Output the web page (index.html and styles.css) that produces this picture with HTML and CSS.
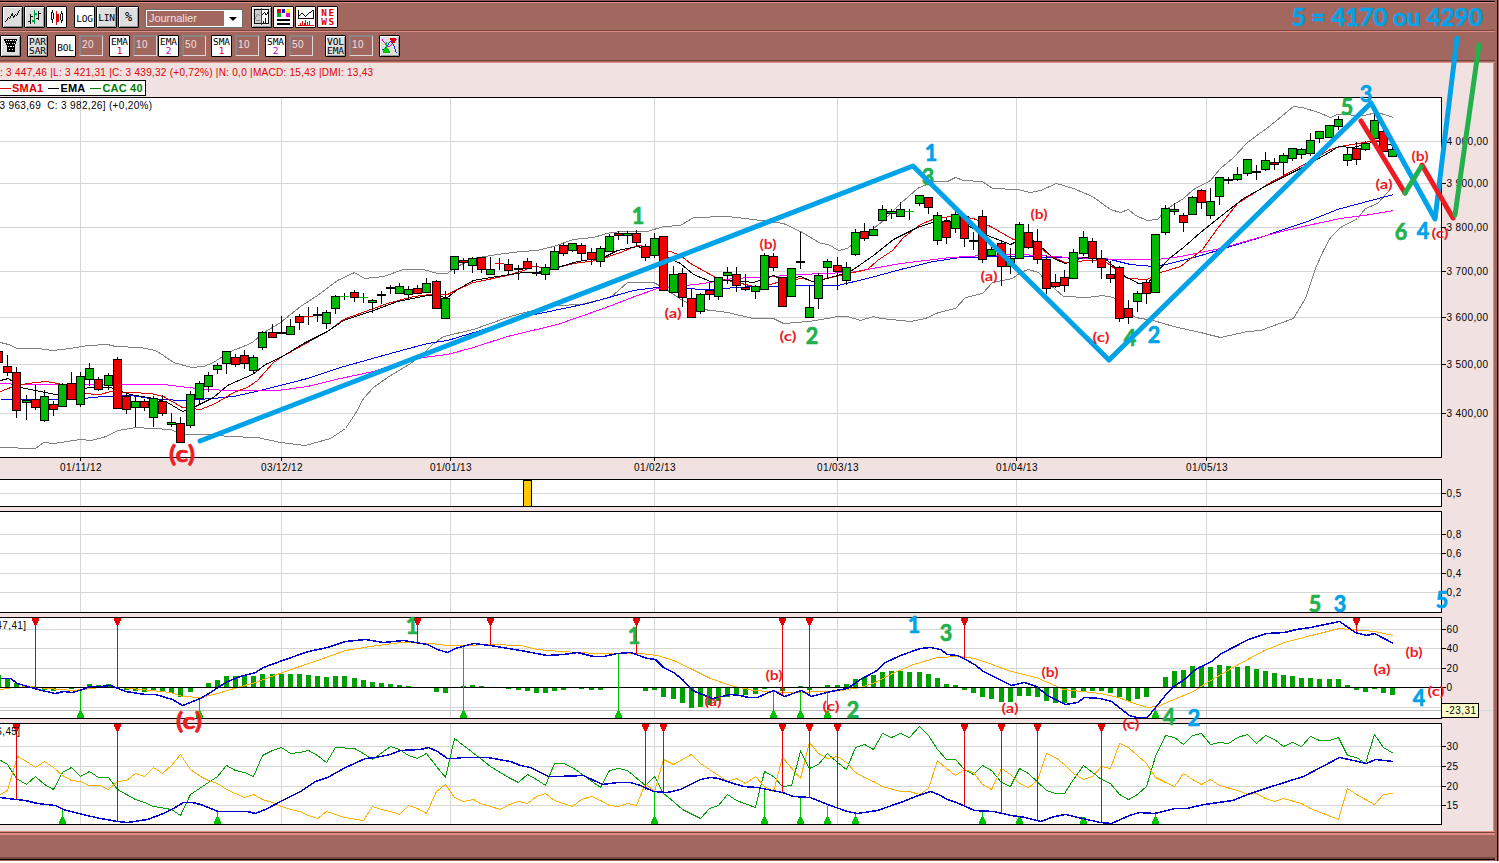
FILE: index.html
```html
<!DOCTYPE html>
<html lang="fr">
<head>
<meta charset="utf-8">
<title>CAC 40</title>
<link rel="stylesheet" href="styles.css">
</head>
<body>
<main class="app">
  <div class="toolbar toolbar-types">
    <div class="group">
      <button class="btn"><svg viewBox="0 0 20 20"><path d="M3 15l3-5 1 2 3-6 1 5 2-4 1 2 3-6" class="ink"/></svg></button>
      <button class="btn"><svg viewBox="0 0 20 20"><path d="M5.500 7v10M3 14.500h2M6 9.500h2M14.500 4v9M12 11.500h2M15 6.500h2" class="ink"/><path d="M10 3v14M7 14.500h2M11 6.500h2" class="ink green wide"/></svg></button>
      <button class="btn on"><svg viewBox="0 0 20 20"><path d="M5.500 3v13M15.500 4v12" class="ink"/><path d="M4.500 5.500h2v7h-2zM14.500 6.500h2v7h-2z" class="box"/><path d="M10.500 4v14" class="ink red"/><path d="M9 7h4v8h-4z" class="fill-red"/></svg></button>
    </div>
    <div class="group">
      <button class="btn on word">LOG</button>
      <button class="btn word lift">LIN</button>
      <button class="btn word percent">%</button>
    </div>
    <div class="select"><span>Journalier</span><i></i></div>
    <div class="group">
      <button class="btn"><svg viewBox="0 0 20 20"><path d="M3 2h14v14H3z" fill="#fff"/><path d="M3 2h6v14H3z" fill="#ccc"/><path d="M2.500 2v14.500h15V2.500H2M10.500 12v4M12.500 14v2M14.500 11v5" class="ink"/><path d="M3 12l3-5 2 2M4 14h4" class="ink grey"/><path d="M10 9l3-4 2 3 2-4" class="ink"/><path d="M9.500 1v17" class="ink red"/></svg></button>
      <button class="btn on"><svg viewBox="0 0 20 20"><path d="M3 2h4v4H3z" fill="#e00000"/><path d="M8 2h4v4H8z" fill="#0018f0"/><path d="M13 2h4v4h-4z" fill="#ffee00"/><path d="M3 6h4v4H3z" fill="#00b030"/><path d="M13 6h4v4h-4z" fill="#e000e0"/><path d="M3 13h14M3 17h14" class="ink wide"/></svg></button>
      <button class="btn on"><svg viewBox="0 0 20 20"><path d="M3 9l3-3 4 3 4-4 1 1 3-3M2.500 3v8.500h16V3" class="ink"/><path d="M2 18.500h17M4.500 16v2M6.500 14v4M8.500 16v2M10.500 13v5M12.500 15v3M14.500 14v4" class="ink red"/></svg></button>
      <button class="btn on pair news"><b>NE</b><b>WS</b></button>
    </div>
  </div>
  <div class="toolbar toolbar-indicators">
    <button class="btn"><svg viewBox="0 0 20 20"><path d="M3 3h14l-2 6v7H6V9z" fill="#000"/><path d="M5 4.500h11M6 7.500h9M7 10.500h7M8 13.500h5" class="ink dots"/></svg></button>
    <button class="btn pair psar"><b>PAR</b><b>SAR</b></button>
    <button class="btn on word bol">BOL</button><input class="num" value="20">
    <button class="btn on pair ema1"><b>EMA</b><b class="r">1</b></button><input class="num" value="10">
    <button class="btn on pair ema2"><b>EMA</b><b class="m">2</b></button><input class="num" value="50">
    <button class="btn on pair sma1"><b>SMA</b><b class="r">1</b></button><input class="num" value="10">
    <button class="btn on pair sma2"><b>SMA</b><b class="m">2</b></button><input class="num" value="50">
    <button class="btn pair vol"><b>VOL</b><b>EMA</b></button><input class="num" value="10">
    <button class="btn sig"><svg viewBox="0 0 20 20"><path d="M2 3l6 8 3-1 6-7" class="ink mag"/><path d="M2 14l3-1 6-8 4 5 2 7" class="ink blue"/><path d="M11 2h6v2l-2 3h-2l-2-3z" class="fill-red"/><path d="M3 17v-2l2-3h3l2 3v2z" fill="#00c800"/><path d="M6.500 6v6" class="ink green"/></svg></button>
  </div>

  <section class="workspace">
    <p class="stats">: 3 447,46 |L: 3 421,31 |C: 3 439,32 (+0,72%) |N: 0,0 |MACD: 15,43 |DMI: 13,43</p>
    <div class="legend">
      <span class="r"><i></i>SMA1</span><span class="k"><i></i>EMA</span><span class="g"><i></i>CAC 40</span>
    </div>
    <svg id="price" class="panel" viewBox="0 97 1493 382" height="382"></svg>
    <svg id="events" class="panel" viewBox="0 479 1493 32" height="32"></svg>
    <svg id="empty" class="panel" viewBox="0 511 1493 106" height="106"></svg>
    <svg id="macd" class="panel" viewBox="0 617 1493 106" height="106"></svg>
    <svg id="dmi" class="panel" viewBox="0 723 1493 108" height="108"></svg>
  </section>
  <footer class="statusbar"></footer>
  <svg id="waves" class="waves" viewBox="0 0 1499 863"></svg>
</main>
<script src="chart.js"></script>
</body>
</html>
```
FILE: styles.css
```css
* { box-sizing: border-box; }
body { margin: 0; background: #fff; font-family: "Liberation Sans", Arial, sans-serif; }
.app {
  position: relative;
  width: 1499px;
  height: 861px;
  overflow: hidden;
  display: flex;
  flex-direction: column;
  background: #a2675f;
  border-right: 1px solid #a2675f;
  box-shadow: inset -1px 0 #000;
}
.toolbar {
  display: flex;
  width: 1495px;
  flex: none;
  background: #a2675f;
}
.toolbar-types {
  height: 31px;
  padding: 2px 0 0 2px;
  border-top: 1px solid #8a5650;
  border-bottom: 1px solid #77463f;
  box-shadow: inset 0 1px #000, inset 0 2px #df8d84;
  gap: 8px;
}
.toolbar-types > * { margin-top: 3px; }
.toolbar-indicators {
  height: 32px;
  padding-top: 3px;
  border-top: 1px solid #df8d84;
  box-shadow: inset 0 -1px #df8d84, inset 0 -2px #a2675f, inset 0 -3px #77463f;
}
.group { display: flex; gap: 1px; height: 22px; }
.group + .group { margin-left: -1px; }
.btn {
  width: 21px;
  height: 22px;
  flex: none;
  padding: 0;
  border: 1px solid #000;
  border-radius: 1px;
  background: #dedede;
  box-shadow: inset 1px 1px #fff, inset -1px -1px #999;
  color: #000;
  font: 9.5px/9px "DejaVu Sans Mono", monospace;
  display: flex;
  align-items: center;
  justify-content: center;
  overflow: hidden;
}
.btn.on { background: #fff; box-shadow: inset 0 0 0 1px #fff; }
.btn svg { width: 19px; height: 20px; shape-rendering: crispEdges; }
.word { letter-spacing: -.3px; padding-top: 2px; }
.word.lift { padding-top: 0; }
.percent { font-size: 12px; padding: 0; }
.pair { flex-direction: column; gap: 0; letter-spacing: -.1px; }
.pair b { font-weight: 400; }
.news { color: #e00000; letter-spacing: 1.5px; padding-left: 2px; }
.news b { font-weight: 700; }
.r { color: #e00000; }
.m { color: #c000c0; }
.k { color: #000; }
.g { color: #007d00; }
.ink { fill: none; stroke: #000; stroke-width: 1; }
.box { fill: #fff; stroke: #000; stroke-width: 1; }
.wide { stroke-width: 2; }
.ink.red { stroke: #e00000; }
.ink.green { stroke: #00a040; }
.ink.grey { stroke: #888; }
.ink.mag { stroke: #e000e0; }
.ink.blue { stroke: #2020d0; }
.ink.dots { stroke: #fff; stroke-dasharray: 1 1; }
.fill-red { fill: #e00000; }
.select {
  width: 98px;
  height: 19px;
  margin-top: 6px;
  margin-left: -2px;
  display: flex;
  border: 1px solid #6d6d6d;
  box-shadow: inset 0 0 0 1px #fff;
  color: #f0e0e0;
  font-size: 11px;
  line-height: 17px;
  padding: 1px;
}
.select span { flex: 1; padding-left: 2px; line-height: 14px; letter-spacing: -.05px; }
.select i { width: 17px; background: #fff; display: flex; align-items: center; justify-content: center; }
.select i::after { content: ""; border: 4px solid transparent; border-top-color: #000; border-bottom: 0; }
.select + .group { margin-left: 0; }
.num {
  width: 24px;
  height: 21px;
  margin-left: 3px;
  padding: 0 0 4px 1px;
  flex: none;
  border: 2px solid #8a8484;
  border-right: 1px solid #e0d8d8;
  border-bottom: 1px solid #e0d8d8;
  background: #a2675f;
  color: #f0e0e0;
  font: 10px "Liberation Sans", Arial, sans-serif;
  letter-spacing: .4px;
}
.psar { margin-left: 6px; }
.bol { margin-left: 7px; }
.ema1 { margin-left: 6px; }
.ema2 { margin-left: 1px; }
.sma1 { margin-left: 5px; }
.sma2 { margin-left: 6px; }
.vol { margin-left: 12px; }
.sig { margin-left: 6px; }
.workspace {
  width: 1494px;
  height: 768px;
  flex: none;
  background: #f1e1e1;
  border-right: 1px solid #df8d84;
  display: flex;
  flex-direction: column;
  align-items: flex-start;
}
.stats {
  margin: 0;
  height: 17px;
  line-height: 20px;
  font-size: 10px;
  letter-spacing: .27px;
  white-space: pre;
  color: #e00000;
}
.legend {
  width: 146px;
  height: 16px;
  margin-bottom: 1px;
  display: flex;
  gap: 5px;
  border: 1px solid #000;
  border-left: 0;
  background: #fff;
  font: bold 11px/15px "Liberation Sans", Arial, sans-serif;
  letter-spacing: .2px;
}
.legend span { display: flex; align-items: center; gap: 1px; white-space: nowrap; }
.legend i { width: 11px; height: 1px; background: currentColor; }
.panel { width: 1493px; flex: none; display: block; shape-rendering: crispEdges; }
.panel text { font: 10px "Liberation Sans", Arial, sans-serif; letter-spacing: .4px; }
.statusbar {
  width: 1495px;
  height: 30px;
  flex: none;
  border-top: 1px solid #df8d84;
  box-shadow: inset 0 1px #77463f, inset 0 3px #df8d84, inset 0 -1px #a2675f, inset 0 -2px #000, inset 0 -4px #77463f;
}
.waves { position: absolute; left: 0; top: 0; width: 1499px; height: 863px; pointer-events: none; }
.waves text { font-family: Lato, sans-serif; font-weight: 700; text-anchor: middle; }
.waves .major { stroke-width: .7; }
.waves polyline { fill: none; stroke-width: 5; stroke-linecap: round; stroke-linejoin: round; }
```
FILE: chart.js
```js
const NS = 'http://www.w3.org/2000/svg';
function el(parent, name, attrs, text) {
  const n = document.createElementNS(NS, name);
  for (const k in attrs) n.setAttribute(k, attrs[k]);
  if (text !== undefined) n.textContent = text;
  parent.appendChild(n);
  return n;
}
const dayX = i => 7 + 9 * i + Math.floor((i + (i < 64 ? 7 : 8)) / 9);
const MONTHS = [[80, '01/11/12'], [281, '03/12/12'], [450, '01/01/13'], [654, '01/02/13'], [837, '01/03/13'], [1016, '01/04/13'], [1206, '01/05/13']];

function vline(g, x, y1, y2, color, w) {
  el(g, 'path', { d: `M${x} ${y1}V${y2}`, stroke: color, 'stroke-width': w || 1 });
}
function hline(g, x1, x2, y, color) {
  el(g, 'path', { d: `M${x1} ${y}H${x2}`, stroke: color });
}
function curve(g, points, color, w) {
  el(g, 'polyline', { points, fill: 'none', stroke: color, 'stroke-width': w || 1 });
}
function panel(id, top, bottom, ticks) {
  const svg = document.getElementById(id);
  const g = el(svg, 'g', { transform: 'translate(.5 .5)' });
  el(g, 'rect', { x: -5, y: top, width: 1446, height: bottom - top, fill: '#fff' });
  MONTHS.forEach(m => vline(g, m[0], top, bottom, '#d6d6d6'));
  ticks.forEach(t => {
    hline(g, -1, 1441, t[0], '#d6d6d6');
    hline(g, 1441, 1445, t[0], '#000');
    const a = { x: 1446, y: t[0] + 3.5 };
    if (t[1].length > 6) { a.textLength = 42; }
    if (t[1]) el(g, 'text', a, t[1]);
  });
  return g;
}
function frame(g, top, bottom) {
  el(g, 'rect', { x: -5, y: top, width: 1446, height: bottom - top, fill: 'none', stroke: '#000' });
}
function sells(g, top, list) {
  list.forEach(([x, y]) => {
    vline(g, x, top, y, '#e60000');
    el(g, 'path', { d: `M${x - 3.5} ${top - .5}h7v3h-1v2h-1v2h-3v-2h-1v-2h-1z`, fill: '#e60000' });
  });
}
function buys(g, bottom, list) {
  list.forEach(([x, y]) => {
    vline(g, x, y, bottom, '#00c400');
    el(g, 'path', { d: `M${x - 3.5} ${bottom - .5}h7v-3h-1v-2h-1v-2h-3v2h-1v2h-1z`, fill: '#00c400' });
  });
}

/* Price panel. Sessions: colour (r, g, d = doji, R/G = thin coloured cross), body top, body bottom, high, low */
const FIRST = -1;
const SESSIONS = `r351,363,351,363 r366,373,355,376 r372,411,367,418 g400,403,395,420 r399,408,385,410 g396,421,390,422 r404,410,401,416 g384,407,383,407 r383,400,372,400 g376,405,372,407
g368,380,363,386 r379,390,377,391 g375,386,373,390 r359,409,357,409 r396,410,393,414 g401,408,397,427 r401,408,399,411 g398,418,396,427 r401,414,395,416 g422,425,413,427
r423,443,417,443 g394,426,391,428 g383,399,381,405 g375,387,372,392 g365,370,363,374 g351,364,351,374 r357,365,354,367 r355,364,350,369 g357,371,355,374 g332,348,331,350
r332,338,324,338 d332,334,316,334 g326,335,319,335 r316,323,314,330 R316,317,307,325 d314,316,307,322 g312,324,310,329 g296,309,295,314 G296,297,293,300 r292,298,290,302
G297,298,293,303 g300,303,299,313 d294,296,291,304 d287,289,285,294 g286,294,283,294 g289,295,286,300 r288,294,285,294 g283,293,278,293 r281,309,280,309 g298,319,291,319
g256,270,256,274 r260,263,258,270 g258,266,257,273 r257,270,257,273 g269,275,257,275 R263,264,258,270 r264,271,259,274 d268,270,265,280 r261,269,258,269 d272,274,263,276
g267,275,264,280 g251,270,247,270 r245,254,243,256 g243,251,243,252 r245,254,243,261 r252,260,248,265 g248,262,246,267 g236,252,234,252 r233,236,231,240 g233,236,231,244
r233,243,230,247 r246,258,244,261 g238,256,233,258 r236,291,236,291 g274,293,266,293 r273,298,268,307 r298,318,288,318 g294,312,293,314 r290,295,282,300 g277,297,277,300
g272,276,267,284 r274,286,267,292 r287,290,274,291 g286,292,285,299 g255,290,253,290 r256,268,253,271 r277,307,277,307 g268,297,268,297 d261,263,232,269 g307,318,285,318
g275,299,273,309 g261,268,259,278 r265,272,257,290 g267,281,262,285 g232,255,229,256 r231,239,223,241 g229,236,226,236 g209,221,205,221 g211,214,209,219 g209,217,202,217
G211,212,209,220 g195,204,195,206 r197,208,197,214 g215,241,212,245 r221,238,218,244 g214,229,210,233 r216,239,216,247 d240,242,232,250 r216,260,210,263 g249,256,247,256
r243,267,241,286 g258,267,248,274 g224,259,222,259 r232,248,224,249 r241,260,229,264 r259,289,255,294 r282,287,274,288 r277,286,270,292 g252,279,249,279 g237,254,231,256
r241,259,238,263 r258,268,250,279 r274,279,261,283 r267,319,266,322 r308,318,300,324 g293,302,291,312 r282,294,280,304 g234,293,234,293 g208,233,205,235 g209,212,203,215
r215,223,213,232 g197,215,196,215 r190,203,189,209 g201,216,188,219 g177,197,177,205 d179,181,177,184 g174,180,167,181 g159,174,159,176 d171,173,165,180 g160,170,152,171
r162,165,158,170 g155,163,153,175 g148,159,148,161 g149,155,148,159 g140,154,133,156 g131,139,131,143 g125,138,125,138 g119,127,116,130 g154,161,147,166 r148,160,142,165
g143,150,141,151 g120,139,112,139 r131,152,127,152 g149,157,146,157`.split(/\s+/);

const price = panel('price', 97, 457, [[141, '4 000,00'], [183, '3 900,00'], [227, '3 800,00'], [271, '3 700,00'], [317, '3 600,00'], [364, '3 500,00'], [413, '3 400,00']]);
curve(price, '0,342 8,344 17,348 38,348 52,350 70,348 88,345 107,344 115,346 140,347 155,350 163,355 173,362 191,367 203,366 213,362 230,351 243,346 252,342 262,333 280,322 300,306 317,295 337,280 354,272 364,278 383,276 403,269 423,269 437,273 447,273 453,268 473,258 497,254 520,251 537,250 553,246 573,239 593,237 610,232 623,231 647,231 663,226 680,225 693,217 727,216 753,219 783,223 802,232 820,243 828,244 838,250 847,248 860,237 873,228 883,220 900,203 917,188 933,181 947,181 955,177 963,180 982,181 992,188 1017,189 1030,192 1040,190 1056,183 1073,188 1092,196 1110,209 1120,212 1128,209 1135,215 1147,220 1157,219 1167,208 1183,198 1193,189 1210,180 1220,168 1233,157 1247,142 1270,125 1293,106 1302,107 1318,112 1330,117 1337,114 1363,115 1377,112 1387,115 1393,117', '#808080');
curve(price, '0,447 35,448 43,442 53,443 80,439 90,440 103,437 118,430 135,427 170,429 183,434 213,434 227,436 257,437 280,442 305,445 330,438 345,428 355,413 363,398 373,387 387,377 410,363 423,353 432,344 443,336 473,329 507,317 520,313 557,305 580,304 610,297 627,282 653,282 663,287 682,300 703,309 727,312 753,318 773,318 783,323 808,321 827,318 837,316 847,316 860,320 873,316 880,318 910,321 925,318 938,312 955,308 965,297 982,293 992,282 1012,278 1020,272 1028,269 1038,272 1047,282 1063,296 1087,297 1102,295 1113,297 1120,305 1135,317 1153,320 1173,326 1200,332 1220,337 1247,331 1260,330 1293,318 1305,298 1315,268 1323,250 1330,237 1340,227 1357,218 1365,208 1377,203 1388,191', '#808080');
curve(price, '0,399 57,399 83,398 103,396 130,395 150,398 180,400 213,398 233,396 260,390 307,378 340,367 390,353 427,343 447,340 490,327 520,317 587,303 633,290 657,287 707,289 753,286 837,285 867,278 900,269 933,261 960,257 1013,256 1053,257 1110,259 1130,264 1153,266 1170,263 1197,256 1227,247 1260,237 1280,230 1307,221 1337,209 1363,202 1393,194', '#0000e6');
curve(price, '0,383 20,384 163,384 187,387 207,389 230,390 277,390 307,386 340,378 373,371 397,363 423,357 447,354 473,347 507,336 557,324 603,308 637,295 657,288 703,283 733,278 770,276 820,273 850,272 900,263 950,257 983,255 1020,254 1070,257 1120,259 1157,259 1180,256 1220,248 1273,233 1307,225 1340,218 1370,214 1393,210', '#f0f');
curve(price, '0,391 13,386 27,383 45,381 58,383 80,393 100,394 110,391 150,393 163,396 182,407 200,409 215,403 233,392 247,387 257,380 273,362 282,356 327,331 343,319 373,308 387,303 413,296 430,294 447,294 457,289 473,282 507,275 523,270 533,266 553,268 573,263 597,260 620,252 637,245 653,247 670,251 680,255 690,263 717,278 737,282 753,286 767,285 783,280 803,278 812,281 830,277 867,269 877,260 892,250 903,237 920,224 937,217 957,216 973,218 990,226 1013,239 1033,243 1053,257 1065,262 1087,260 1103,260 1117,270 1127,278 1147,279 1157,273 1180,266 1202,249 1217,228 1237,203 1270,182 1300,166 1330,149 1340,146 1370,141 1392,139', '#e60000');
curve(price, '0,380 8,378 20,387 55,394 70,392 88,387 110,387 130,394 153,398 167,402 182,411 193,407 213,397 227,385 245,377 252,374 265,364 282,356 303,343 327,331 343,320 373,310 397,301 427,295 447,297 457,289 473,280 497,276 523,272 537,272 557,267 577,261 603,257 617,250 637,246 653,250 667,257 680,263 693,274 710,281 733,280 753,282 765,278 773,275 783,280 800,276 812,281 827,278 850,271 873,255 893,239 917,227 932,222 947,220 963,223 987,235 1010,244 1018,240 1033,240 1047,252 1053,258 1065,263 1083,257 1107,260 1123,275 1138,283 1148,282 1153,275 1170,257 1183,247 1200,232 1220,216 1243,198 1270,183 1300,168 1327,153 1338,146 1353,147 1367,143 1377,141 1392,145', '#000');
SESSIONS.forEach((s, n) => {
  const x = dayX(n + FIRST), kind = s[0];
  const [top, bottom, high, low] = s.slice(1).split(',').map(Number);
  vline(price, x, high - .5, low - .5, '#000');
  const y = top, h = bottom - top - 1;
  if (kind === 'r' || kind === 'g') {
    el(price, 'rect', { x: x - 4, y, width: 8, height: h, fill: kind === 'r' ? '#f00000' : '#00b900', stroke: '#000' });
  } else if (kind === 'd') {
    el(price, 'rect', { x: x - 4.5, y: y - .5, width: 9, height: 2, fill: '#000' });
  } else {
    hline(price, x - 4.5, x + 4.5, y, kind === 'R' ? '#e60000' : '#00b900');
  }
});
frame(price, 97, 457);
MONTHS.forEach(m => {
  vline(price, m[0], 457, 460, '#000');
  el(price, 'text', { x: m[0] + .5, y: 470.5, 'text-anchor': 'middle', textLength: 42 }, m[1]);
});
el(price, 'text', { x: -1, y: 108.5, textLength: 153, style: 'white-space:pre' }, '3 963,69  C: 3 982,26] (+0,20%)');

const events = panel('events', 479, 506, [[493, '0,5']]);
el(events, 'rect', { x: 523, y: 480, width: 8, height: 26, fill: '#ffc800', stroke: '#000' });
frame(events, 479, 506);

const empty = panel('empty', 511, 612, [[534, '0,8'], [553, '0,6'], [573, '0,4'], [592, '0,2']]);
frame(empty, 511, 612);

/* MACD panel: histogram heights in pixels, one per session */
const HIST = [12, 9, 4, 0, -1, -2, -3, 0, -1, 0, 3, 2, 3, 0, -2, -3, -4, -2, -3, -5, -9, -4, 0, 4, 7, 11, 11, 11, 11, 13, 13, 13, 13, 13, 12, 11, 10, 11, 11, 9, 7, 5, 4, 3, 2, 1, 0, 0, -4, -5, 0, 1, 2, 1, 0, 0, -1, -2, -3, -5, -5, -3, -2, 0, -1, -2, -2, 0, 0, 0, 0, -3, -2, -9, -11, -15, -20, -19, -17, -13, -9, -8, -7, -6, -1, 0, -3, 0, 1, -2, 0, 2, 2, 3, 8, 10, 12, 15, 16, 16, 15, 15, 13, 9, 3, 2, -2, -5, -9, -11, -14, -14, -8, -8, -9, -13, -15, -15, -10, -3, -3, -3, -5, -9, -13, -11, -9, 0, 10, 16, 17, 21, 21, 20, 22, 21, 20, 21, 18, 16, 14, 12, 11, 9, 9, 8, 8, 8, 2, -2, -4, -1, -5, -7];
const macd = panel('macd', 617, 718, [[629, '60'], [648, '40'], [668, '20'], [707, '']]);
hline(macd, -1, 1441, 710, '#bdbdbd');
HIST.forEach((v, n) => {
  if (v) vline(macd, dayX(n + FIRST), 687, 687.5 - v - (v > 0 ? 1 : 0), '#00a000', 5);
});
curve(macd, '0,689 13,687 30,686 47,688 73,690 100,687 120,687 140,689 170,692 182,696 200,697 217,693 237,687 255,682 282,672 317,660 345,650 370,646 400,642 430,643 447,645 463,645 490,644 520,645 537,649 560,651 597,653 640,653 657,655 673,660 692,669 710,678 730,685 753,690 787,692 833,691 860,687 875,682 892,673 913,664 937,657 958,656 974,658 986,662 1011,671 1036,677 1063,689 1100,693 1118,697 1134,703 1147,707 1157,706 1171,700 1193,691 1207,682 1236,665 1264,650 1284,642 1303,637 1339,628 1374,631 1393,635', '#ffb000');
hline(macd, -1, 1445, 687, '#000');
sells(macd, 618, [[35, 689], [117, 687], [417, 643], [490, 645], [636, 653], [782, 695], [809, 695], [964, 659], [1356, 632]]);
buys(macd, 718, [[80, 689], [199, 697], [463, 644], [618, 652], [773, 690], [800, 690], [827, 690], [1155, 707]]);
curve(macd, '0,678 10,678 17,683 37,689 55,693 63,691 72,692 82,689 90,686 100,686 110,685 125,691 145,694 155,694 172,699 182,705 200,698 210,692 227,681 240,676 255,672 263,667 282,660 308,651 327,647 345,641 365,639 383,642 403,640 427,644 437,649 447,652 455,648 473,643 490,645 520,650 547,655 563,654 577,652 593,656 603,656 617,653 630,652 647,658 655,659 663,667 673,672 682,679 692,690 712,698 730,694 740,695 748,697 757,697 773,690 784,696 801,690 811,696 830,691 847,688 860,679 875,671 885,662 900,655 920,648 930,647 940,649 947,654 957,655 965,659 974,664 983,671 1011,685 1024,682 1036,686 1047,695 1065,704 1077,702 1084,697 1100,698 1111,701 1129,715 1136,717 1147,717 1155,707 1164,696 1173,686 1184,679 1195,669 1211,661 1221,653 1248,639 1266,633 1284,632 1296,629 1310,627 1339,621 1355,632 1366,635 1374,633 1393,643', '#0000c8', 1.5);
frame(macd, 617, 718);
el(macd, 'text', { x: 1446, y: 690.5 }, '0');
el(macd, 'text', { x: 26, y: 628.5, 'text-anchor': 'end' }, '47,41]');
hline(macd, 1478, 1493, 710, '#cfe0e0');
el(macd, 'rect', { x: 1441, y: 703, width: 37, height: 14, fill: '#ffffcc', stroke: '#000' });
el(macd, 'text', { x: 1445, y: 713.5, textLength: 31 }, '-23,31');

const dmi = panel('dmi', 723, 824, [[746, '30'], [766, '25'], [786, '20'], [805, '15']]);
curve(dmi, '0,760 7,764 16,778 26,784 35,776 44,784 53,789 62,772 71,767 80,776 89,771 98,777 108,777 117,789 126,794 135,799 144,802 153,806 171,809 180,815 190,794 208,782 217,776 226,765 235,770 244,772 253,776 262,755 272,750 281,747 290,753 299,752 308,750 317,755 326,762 335,747 354,748 363,753 372,759 390,746 399,749 408,755 417,758 426,753 436,766 445,777 454,738 463,745 480,758 490,766 508,777 518,782 527,774 536,779 545,785 554,763 563,763 572,767 600,787 609,770 618,768 627,770 645,785 654,776 663,793 673,801 682,809 700,818 709,808 718,805 727,794 736,800 755,807 764,771 773,776 782,786 791,785 800,751 809,768 818,764 827,753 837,762 846,769 855,747 864,744 873,749 882,733 891,737 900,733 909,737 919,726 928,735 937,749 946,759 955,759 964,769 973,774 982,765 991,770 1001,782 1010,786 1019,768 1028,773 1046,790 1055,793 1064,793 1073,779 1083,765 1101,779 1110,783 1119,794 1128,799 1137,794 1146,786 1155,756 1165,735 1174,737 1183,744 1192,735 1201,733 1210,744 1219,742 1228,743 1237,737 1247,734 1256,743 1265,735 1274,739 1283,746 1292,742 1301,746 1310,736 1319,740 1329,740 1338,737 1347,755 1356,757 1365,763 1374,734 1383,747 1393,753', '#00a000');
curve(dmi, '0,794 7,790 12,773 17,756 26,761 35,767 44,761 53,767 62,775 71,780 80,781 89,785 99,785 108,789 117,781 126,780 135,773 144,776 153,767 162,773 171,765 180,754 190,769 200,776 208,780 217,783 226,789 244,797 253,794 262,799 272,802 281,806 290,809 299,811 308,815 317,818 326,811 335,814 344,817 363,820 372,806 381,809 390,811 399,814 408,805 417,808 426,813 436,791 445,784 454,797 463,801 473,799 480,803 490,806 500,809 509,804 518,801 527,803 536,796 545,793 554,800 563,803 572,806 581,799 591,796 600,800 609,805 618,806 627,803 636,805 645,783 654,791 663,759 673,764 691,754 700,763 727,781 736,778 745,783 755,776 764,786 773,791 782,757 800,778 809,742 818,753 827,758 837,756 846,762 855,772 864,777 873,781 882,786 900,791 909,791 919,794 928,788 937,760 946,768 955,775 964,769 973,772 982,784 991,789 1001,768 1010,774 1019,783 1028,787 1037,780 1046,753 1055,757 1064,764 1073,773 1083,779 1092,776 1101,766 1110,768 1119,743 1128,747 1146,763 1155,777 1165,782 1174,786 1183,773 1192,779 1201,784 1210,779 1219,785 1237,790 1248,794 1256,793 1265,798 1274,801 1283,798 1301,803 1310,808 1338,819 1347,788 1356,794 1365,799 1374,804 1383,794 1393,793', '#ffb000');
sells(dmi, 724, [[16, 799], [117, 821], [645, 789], [663, 791], [782, 792], [809, 797], [837, 808], [964, 805], [1001, 813], [1037, 820], [1101, 822]]);
buys(dmi, 824, [[62, 809], [217, 811], [654, 790], [764, 788], [800, 795], [827, 805], [855, 811], [982, 811], [1019, 816], [1083, 816], [1155, 812]]);
curve(dmi, '0,797 7,798 25,800 37,803 55,805 63,809 82,814 100,818 117,821 127,822 147,819 163,813 173,808 183,802 192,802 200,804 218,811 247,811 255,813 265,809 282,800 300,791 315,781 327,777 345,767 365,758 375,757 390,754 400,750 420,749 428,747 437,751 447,758 455,758 463,757 487,757 510,761 520,765 530,767 548,776 557,776 583,775 602,784 617,782 630,782 640,785 653,791 667,792 680,789 700,779 710,777 718,778 730,782 743,786 757,787 782,792 793,796 810,797 827,804 847,811 857,813 877,810 900,802 918,795 930,791 940,795 947,799 956,802 974,810 993,811 1011,815 1025,817 1040,821 1054,816 1065,814 1082,818 1100,822 1111,823 1129,815 1139,812 1154,813 1175,808 1186,808 1204,804 1232,800 1250,793 1268,787 1284,782 1303,776 1339,757 1353,760 1366,763 1375,759 1393,761', '#0000c8', 1.5);
frame(dmi, 723, 824);
el(dmi, 'text', { x: 20, y: 734.5, 'text-anchor': 'end' }, '6,45]');

/* Elliott wave drawing on top of every panel */
const waves = document.getElementById('waves');
const BLUE = '#00a2e8', GREEN = '#22b14c', RED = '#ed1c24';
function digit(x, y, s, fill) {
  el(waves, 'text', { x, y: y + 8, class: 'major', 'font-size': 23, textLength: 12.5, lengthAdjust: 'spacingAndGlyphs', fill, stroke: fill }, s);
}
function minor(x, y, s) {
  el(waves, 'text', { x, y: y + 4.5, 'font-size': 14, textLength: 17, lengthAdjust: 'spacingAndGlyphs', fill: RED }, s);
}
digit(928, 177, '3', GREEN);
digit(1130, 338, '4', GREEN);
el(waves, 'polyline', { points: '200,441 913,166 1109,360 1371,103 1435,219 1457,38', stroke: BLUE });
el(waves, 'polyline', { points: '1361,121 1405,193', stroke: RED });
el(waves, 'polyline', { points: '1422,165 1453,218', stroke: RED });
el(waves, 'polyline', { points: '1405,193 1421,167', stroke: GREEN });
el(waves, 'polyline', { points: '1455,215 1479,45', stroke: GREEN });
[[638, 216, '1'], [812, 336, '2'], [1347, 107, '5'], [1401, 232, '6'], [412, 626, '1'], [634, 636, '1'], [853, 710, '2'], [946, 633, '3'], [1169, 717, '4'], [1315, 604, '5']].forEach(d => digit(...d, GREEN));
[[931, 153, '1'], [1154, 335, '2'], [1366, 94, '3'], [1423, 231, '4'], [914, 625, '1'], [1194, 718, '2'], [1340, 604, '3'], [1442, 600, '5'], [1419, 698, '4']].forEach(d => digit(...d, BLUE));
[[768, 244, '(b)'], [673, 313, '(a)'], [788, 336, '(c)'], [1039, 214, '(b)'], [989, 276, '(a)'], [1101, 337, '(c)'], [1384, 184, '(a)'], [1420, 156, '(b)'], [1440, 233, '(c)'], [774, 675, '(b)'], [713, 701, '(a)'], [831, 706, '(c)'], [1050, 672, '(b)'], [1010, 708, '(a)'], [1131, 724, '(c)'], [1414, 652, '(b)'], [1382, 669, '(a)'], [1436, 691, '(c)']].forEach(d => minor(...d));
[[182, 462], [189, 729]].forEach(([x, y]) => el(waves, 'text', { x, y, class: 'major', 'font-size': 23, textLength: 26, lengthAdjust: 'spacingAndGlyphs', fill: RED, stroke: RED }, '(c)'));
el(waves, 'text', { x: 1387, y: 26, 'font-size': 24, class: 'major', textLength: 191, lengthAdjust: 'spacingAndGlyphs', fill: BLUE, stroke: BLUE }, '5 = 4170 ou 4290');
```
